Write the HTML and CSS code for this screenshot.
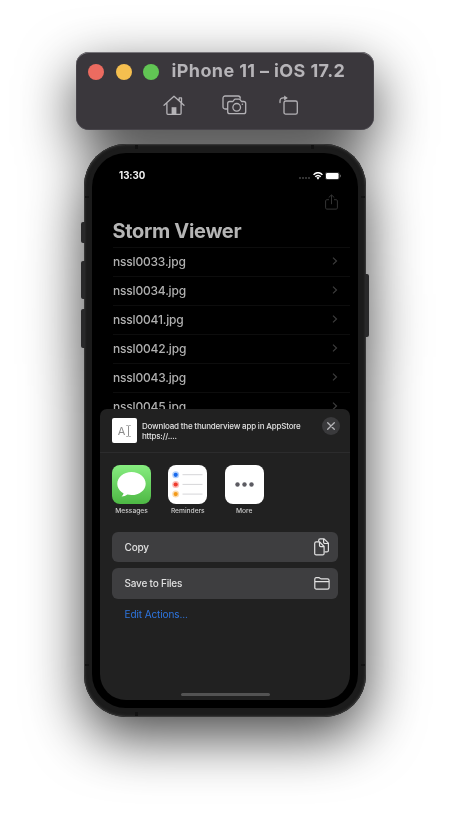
FILE: index.html
```html
<!DOCTYPE html>
<html lang="en">
<head>
<meta charset="utf-8">
<title>iPhone 11 – iOS 17.2</title>
<link rel="stylesheet" href="styles.css">
</head>
<body>
<main class="simulator">
  <header class="window-bar">
    <div class="title-row">
      <div class="lights"><i class="light red"></i><i class="light yellow"></i><i class="light green"></i></div>
      <h1 class="window-title">iPhone 11 – iOS 17.2</h1>
    </div>
    <div class="tools">
      <svg class="tool" width="22" height="20" viewBox="0 0 22 20"><path d="M1 10.2 11 1.3l10 8.9M3.9 8.2v10.1c0 .6.4 1 1 1h12.2c.6 0 1-.4 1-1V8.2M16.2 5.4V2.9h2.3v4.7"/><path class="solid" d="M8.6 19v-6.8h4.8V19z"/></svg>
      <svg class="tool" width="25" height="20" viewBox="0 0 25 20"><path d="M5.3 14H3.1A2.1 2.1 0 0 1 1 11.900V3.100C1 1.900 1.900 1 3.100 1h13.100c1.200 0 2 .8 2.100 2.200"/><path d="M7.700 18.700h14a2 2 0 0 0 2-2V8.500a2 2 0 0 0-2-2h-2.200l-1.200-1.700c-.3-.4-.6-.6-1.100-.6h-4c-.5 0-.8.2-1.100.6l-1.200 1.700H7.700a2 2 0 0 0-2 2v8.200c0 1.100.9 2 2 2z"/><circle cx="14.700" cy="12.300" r="3.800"/><circle class="solid" cx="20.400" cy="9.200" r=".8"/></svg>
      <svg class="tool" width="20" height="20" viewBox="0 0 20 20"><rect x="5" y="6" width="13.300" height="13.100" rx="1.700"/><path d="M1 7.500V6c0-2 1.300-3.200 3.200-3.200h2.300"/><path class="solid" d="M5.200.4 8.800 2.900 5.200 5.500z"/></svg>
    </div>
  </header>

  <section class="phone">
    <i class="key mute"></i><i class="key vol-up"></i><i class="key vol-down"></i><i class="key power"></i>
    <i class="seam top-left"></i><i class="seam top-right"></i><i class="seam bottom-left"></i>
    <i class="seam side left-top"></i><i class="seam side right-top"></i><i class="seam side left-bottom"></i><i class="seam side right-bottom"></i>
    <div class="bezel">
      <div class="screen">
        <div class="status">
          <span class="clock">13:30</span>
          <div class="indicators">
            <span class="dots"><i></i><i></i><i></i><i></i></span>
            <svg width="10" height="8" viewBox="0 0 10 8" fill="none" stroke="#fff" stroke-width="1.500"><path d="M.6 2.900C3-.1 7-.1 9.400 2.900"/><path d="M2.300 4.700c1.500-1.700 3.900-1.700 5.400 0"/><path d="m3.400 5.600 1.600 2.200 1.600-2.200Q5 4.500 3.400 5.600z" fill="#fff" stroke="none"/></svg>
            <svg width="16" height="8" viewBox="0 0 16 8"><rect x=".3" y=".3" width="14" height="7.200" rx="2" fill="none" stroke="#555" stroke-width=".6"/><rect x="1" y="1" width="12.600" height="6" rx="1.200" fill="#fff"/><path d="M15 2.600q1 .4 1 1.400t-1 1.400z" fill="#666"/></svg>
          </div>
        </div>
        <div class="nav"><svg width="13" height="16" viewBox="0 0 13 16" fill="none" stroke="#343434" stroke-width="1"><path d="M4 5.700H1.800c-.7 0-1.200.5-1.200 1.200v7c0 .7.5 1.200 1.200 1.200h9.400c.7 0 1.200-.5 1.200-1.200v-7c0-.7-.5-1.200-1.200-1.200H9M6.500 10.200V1M3.700 3.600 6.500.9l2.800 2.700"/></svg></div>
        <h2 class="heading">Storm Viewer</h2>
        <ul class="files">
          <li>nssl0033.jpg<svg class="chev" width="6" height="8" viewBox="0 0 6 8"><path d="m1 .6 3.500 3.400L1 7.400"/></svg></li>
          <li>nssl0034.jpg<svg class="chev" width="6" height="8" viewBox="0 0 6 8"><path d="m1 .6 3.500 3.400L1 7.400"/></svg></li>
          <li>nssl0041.jpg<svg class="chev" width="6" height="8" viewBox="0 0 6 8"><path d="m1 .6 3.500 3.400L1 7.400"/></svg></li>
          <li>nssl0042.jpg<svg class="chev" width="6" height="8" viewBox="0 0 6 8"><path d="m1 .6 3.500 3.400L1 7.400"/></svg></li>
          <li>nssl0043.jpg<svg class="chev" width="6" height="8" viewBox="0 0 6 8"><path d="m1 .6 3.500 3.400L1 7.400"/></svg></li>
          <li>nssl0045.jpg<svg class="chev" width="6" height="8" viewBox="0 0 6 8"><path d="m1 .6 3.500 3.400L1 7.400"/></svg></li>
        </ul>
        <div class="sheet">
          <div class="sheet-head">
            <div class="thumb"><span>A</span><svg width="5" height="12" viewBox="0 0 5 12" fill="none" stroke="#888" stroke-width=".8"><path d="M.3.5h1.200q1 0 1 1v9q0 1-1 1H.3M4.700.5H3.500q-1 0-1 1v9q0 1 1 1h1.200"/></svg></div>
            <p class="message">Download the thunderview app in AppStore<br>https://....</p>
            <div class="close"><svg width="8" height="8" viewBox="0 0 8 8"><path d="m.7.7 6.600 6.600m0-6.600L.7 7.300" stroke="#b5b5b8" stroke-width="1.300" stroke-linecap="round"/></svg></div>
          </div>
          <div class="apps">
            <div class="app"><svg width="39" height="39" viewBox="0 0 39 39"><defs><linearGradient id="green" x2="0" y2="1"><stop stop-color="#87ed80"/><stop offset="1" stop-color="#4db844"/></linearGradient></defs><rect width="39" height="39" rx="8" fill="url(#green)"/><path d="M19.500 6.900c-7.900 0-14.200 5.200-14.200 11.800 0 4 2.500 7.500 6.200 9.600-.2 1.300-.9 2.400-2 3.300 2.300 0 4.300-.7 5.900-2 1.300.3 2.700.5 4.100.5 7.900 0 14.200-5 14.200-11.400S27.400 6.900 19.500 6.900z" fill="#fff"/></svg><span>Messages</span></div>
            <div class="app"><svg width="39" height="39" viewBox="0 0 39 39"><rect width="39" height="39" rx="8" fill="#fff"/><g fill-opacity=".35"><circle cx="7.700" cy="9.800" r="3.500" fill="#2878f0"/><circle cx="7.700" cy="19.500" r="3.500" fill="#f04030"/><circle cx="7.700" cy="29.100" r="3.500" fill="#f49a20"/></g><circle cx="7.700" cy="9.800" r="2.100" fill="#1769ed"/><circle cx="7.700" cy="19.500" r="2.100" fill="#ee3a2c"/><circle cx="7.700" cy="29.100" r="2.100" fill="#f39a18"/><path d="M14.500 9.700h20M14.500 19.400h20M14.500 29.100h20" stroke="#d6d6d8" stroke-width="1"/></svg><span>Reminders</span></div>
            <div class="app"><svg width="39" height="39" viewBox="0 0 39 39"><rect width="39" height="39" rx="8" fill="#fff"/><g fill="#5c5b62"><circle cx="12.500" cy="19.500" r="2.200"/><circle cx="19.500" cy="19.500" r="2.200"/><circle cx="26.500" cy="19.500" r="2.200"/></g></svg><span>More</span></div>
          </div>
          <div class="actions">
            <div class="action">Copy<svg width="16" height="18" viewBox="0 0 16 18"><path d="M4.700 3.500V2.300c0-.9.600-1.500 1.500-1.500h3.900l4.300 4.300v7.300c0 .9-.6 1.500-1.500 1.500h-2.200M9.600 1v3.300c0 .7.500 1.200 1.200 1.200h3.500" /><path d="M2.200 3.900h3.400l4.500 4.600v6.900c0 .9-.6 1.500-1.500 1.500H2.200c-.9 0-1.500-.6-1.500-1.500v-10c0-.9.600-1.500 1.500-1.500zM5.500 4v3.500c0 .8.400 1.200 1.200 1.200H10"/></svg></div>
            <div class="action">Save to Files<svg width="16" height="13" viewBox="0 0 16 13"><path d="M.8 10.500V2.300C.8 1.300 1.300.7 2.300.7h2.400c.6 0 1 .2 1.400.6.300.3.600.5 1.100.5h6.300c1 0 1.600.6 1.600 1.600v7.100c0 1-.6 1.600-1.600 1.600H2.400c-1 0-1.600-.6-1.600-1.600zM.8 4.700h14.300"/></svg></div>
            <div class="edit">Edit Actions...</div>
          </div>
          <i class="home-line"></i>
        </div>
      </div>
    </div>
  </section>
</main>
</body>
</html>
```
FILE: styles.css
```css
* { box-sizing: border-box; }
body { margin: 0; width: 450px; height: 820px; overflow: hidden; background: #fff; font-family: Inter, sans-serif; }
i { display: block; }
svg { display: block; flex: none; }
.simulator { display: flex; flex-direction: column; align-items: center; padding-top: 52px; height: 820px; filter: drop-shadow(0 20px 28px rgba(0,0,0,.72)); }

.window-bar { width: 298px; height: 78px; border-radius: 13px; background: #3a373c; box-shadow: inset 0 1px 0 #77757a, inset 0 0 0 .5px #555259; }
.title-row { display: flex; align-items: center; padding: 7px 0 0 12px; height: 30px; }
.lights { display: flex; gap: 11.500px; margin-top: 2px; }
.light { width: 16px; height: 16px; border-radius: 50%; }
.red { background: #ec6b60; }
.yellow { background: #f5bf4f; }
.green { background: #61c554; }
.window-title { margin: 0 0 0 12.500px; font-size: 18px; line-height: 22px; font-weight: 700; letter-spacing: .38px; color: #b6b4b8; white-space: nowrap; }
.tools { display: flex; margin: 13px 0 0 87px; }
.tool { fill: none; stroke: #b4b2b6; stroke-width: 1.300; stroke-linejoin: round; stroke-linecap: round; }
.tool + .tool { margin-left: 37px; }
.tool:last-child { margin-left: 32px; }
.tool .solid { fill: #b4b2b6; stroke: none; }

.phone { position: relative; width: 282px; height: 573px; margin-top: 14px; padding: 9px 8px; border-radius: 42px; background: #1b1b1b; box-shadow: inset 0 0 0 1px #363636, inset 0 0 2px 2px #262626; }
.key { position: absolute; left: -3px; width: 4px; border-radius: 2px 0 0 2px; background: #29292a; }
.mute { top: 78px; height: 21px; }
.vol-up { top: 117px; height: 38px; }
.vol-down { top: 165px; height: 39px; }
.power { top: 130px; left: auto; right: -3px; height: 63px; border-radius: 0 2px 2px 0; }
.seam { position: absolute; width: 3px; height: 4px; background: #121212; top: 1px; }
.top-left { left: 51px; }
.top-right { right: 52px; }
.bottom-left { left: 51px; top: auto; bottom: 1px; }
.side { width: 4px; height: 2px; }
.left-top, .right-top { top: 52px; }
.left-bottom, .right-bottom { top: auto; bottom: 51px; }
.left-top, .left-bottom { left: 1px; }
.right-top, .right-bottom { right: 1px; }
.bezel { height: 555px; padding: 8px; border-radius: 34px; background: #000; }
.screen { display: flex; flex-direction: column; width: 250px; height: 539px; border-radius: 26px; overflow: hidden; }

.status { display: flex; justify-content: space-between; height: 27px; padding: 8px 9px 0 19px; flex: none; }
.clock { font-size: 9.700px; line-height: 14px; font-weight: 700; letter-spacing: -.05px; color: #f4f4f4; }
.indicators { display: flex; gap: 2.500px; padding-top: 2.500px; }
.dots { display: flex; gap: 1px; padding-top: 5px; }
.dots i { width: 2px; height: 2px; border-radius: 1px; background: #444; }
.nav { display: flex; justify-content: flex-end; height: 27px; padding: 6px 12.500px 0 0; flex: none; }
.heading { margin: 0; padding: 1px 0 0 12.500px; height: 32px; flex: none; font-size: 20px; line-height: 30px; font-weight: 700; letter-spacing: -.32px; color: #b5b5b5; white-space: nowrap; }
.files { list-style: none; margin: 0 0 0 13px; padding: 0; height: 161.500px; flex: none; overflow: hidden; }
.files li { display: flex; align-items: center; justify-content: space-between; height: 29px; padding: 0 12px 1.500px 0; border-top: 1px solid #0d0d0d; font-size: 12px; font-weight: 500; letter-spacing: -.19px; color: #b0b0b0; }
.chev { fill: none; stroke: #3c3c3c; stroke-width: 1.200; }

.sheet { display: flex; flex-direction: column; flex: 1; border-radius: 7px 7px 0 0; background: #212121; color: #e0e0e0; }
.sheet-head { display: flex; height: 44px; padding: 9.500px 10px 0 12px; border-bottom: 1px solid #2c2c2d; flex: none; }
.thumb { display: flex; align-items: center; justify-content: center; gap: 1px; width: 25px; height: 25px; border-radius: 2px; background: #fff; color: #8b8b8b; font-size: 11px; flex: none; }
.message { margin: 3px 0 0 5px; font-size: 8px; line-height: 10px; font-weight: 500; letter-spacing: -.19px; white-space: nowrap; }
.close { display: flex; align-items: center; justify-content: center; width: 18px; height: 18px; margin: -1px 0 0 auto; border-radius: 50%; background: #3a3a3c; }
.apps { display: flex; gap: 17.300px; height: 79px; padding: 12.500px 0 0 12px; flex: none; }
.app { display: flex; flex-direction: column; align-items: center; width: 39px; font-size: 6.700px; line-height: 9px; font-weight: 500; letter-spacing: -.03px; color: #c9c9c9; white-space: nowrap; }
.app span { margin-top: 3px; }
.actions { display: flex; flex-direction: column; gap: 6px; padding: 0 12px; font-size: 10px; letter-spacing: -.1px; }
.action { display: flex; align-items: center; justify-content: space-between; height: 30.500px; padding: 0 8px 0 12.500px; border-radius: 6px; background: #3e3e40; font-weight: 500; letter-spacing: -.2px; }
.action svg { fill: none; stroke: #e2e2e2; stroke-width: 1.200; stroke-linejoin: round; }
.edit { padding: 3px 0 0 12.500px; line-height: 13px; color: #2e75df; }
.home-line { width: 89px; height: 3.500px; margin: auto auto 4px; border-radius: 2px; background: #535353; }
```
